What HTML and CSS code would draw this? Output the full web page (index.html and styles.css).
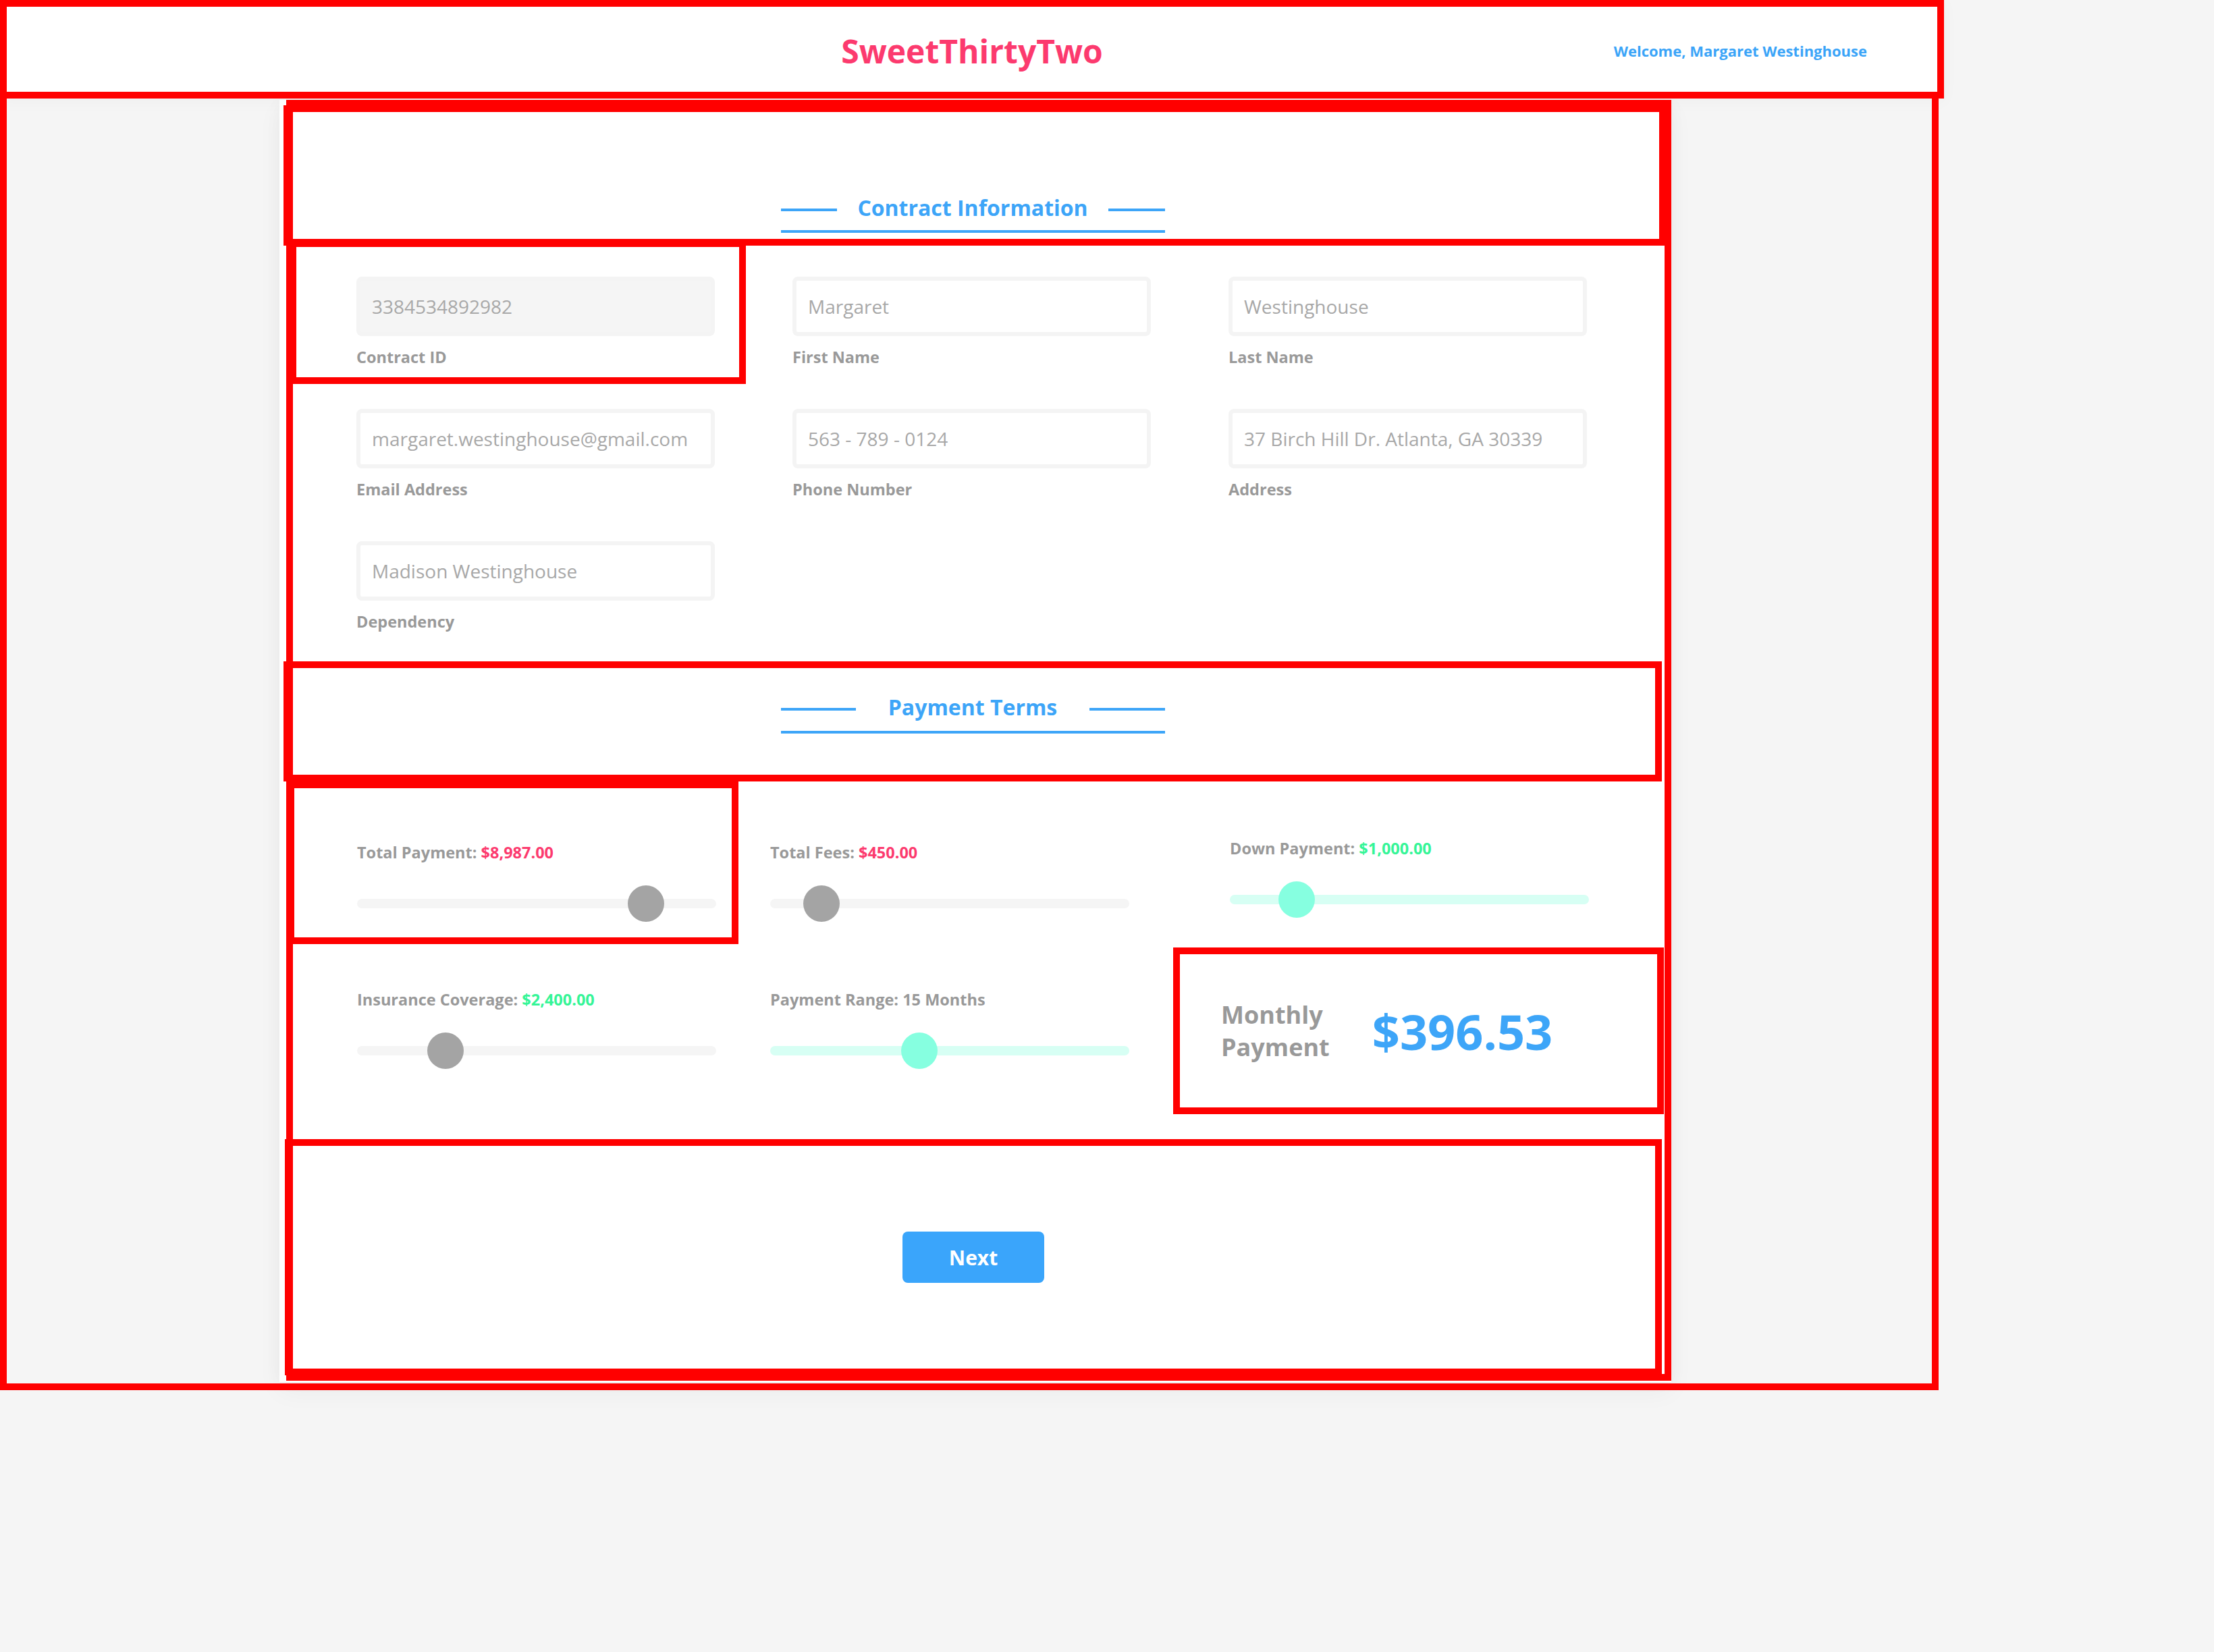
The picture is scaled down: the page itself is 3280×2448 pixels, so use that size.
FILE: index.html
```html
<!DOCTYPE html>
<html lang="en">
<head>
<meta charset="utf-8">
<title>SweetThirtyTwo – Contract</title>
<link rel="stylesheet" href="styles.css">
</head>
<body>
<div class="page">
  <header class="topbar hl">
    <div class="brand">SweetThirtyTwo</div>
    <div class="welcome">Welcome, Margaret Westinghouse</div>
  </header>

  <main class="main hl hl-main">
    <div class="card">
      <div class="card-body hl">

        <section class="section-head section-head--contract hl">
          <div class="heading">
            <div class="heading-row">
              <span class="heading-line"></span>
              <h2 class="heading-title">Contract Information</h2>
              <span class="heading-line"></span>
            </div>
          </div>
        </section>

        <div class="fields">
          <div class="field hl hl-field">
            <div class="input input--disabled">3384534892982</div>
            <div class="field-label">Contract ID</div>
          </div>
          <div class="field">
            <div class="input">Margaret</div>
            <div class="field-label">First Name</div>
          </div>
          <div class="field">
            <div class="input">Westinghouse</div>
            <div class="field-label">Last Name</div>
          </div>
          <div class="field">
            <div class="input">margaret.westinghouse@gmail.com</div>
            <div class="field-label">Email Address</div>
          </div>
          <div class="field">
            <div class="input">563 - 789 - 0124</div>
            <div class="field-label">Phone Number</div>
          </div>
          <div class="field">
            <div class="input">37 Birch Hill Dr. Atlanta, GA 30339</div>
            <div class="field-label">Address</div>
          </div>
          <div class="field">
            <div class="input">Madison Westinghouse</div>
            <div class="field-label">Dependency</div>
          </div>
        </div>

        <section class="section-head section-head--payment hl">
          <div class="heading heading--payment">
            <div class="heading-row">
              <span class="heading-line"></span>
              <h2 class="heading-title">Payment Terms</h2>
              <span class="heading-line"></span>
            </div>
          </div>
        </section>

        <div class="sliders">
          <div class="slider hl hl-slider">
            <div class="slider-label">Total Payment: <span class="val val--pink">$8,987.00</span></div>
            <div class="range"><div class="range-track"></div><div class="range-thumb" style="left: 401px"></div></div>
          </div>
          <div class="slider">
            <div class="slider-label">Total Fees: <span class="val val--pink">$450.00</span></div>
            <div class="range"><div class="range-track"></div><div class="range-thumb" style="left: 49px"></div></div>
          </div>
          <div class="slider slider--raised">
            <div class="slider-label">Down Payment: <span class="val val--green">$1,000.00</span></div>
            <div class="range range--mint"><div class="range-track"></div><div class="range-thumb" style="left: 72px"></div></div>
          </div>
          <div class="slider">
            <div class="slider-label">Insurance Coverage: <span class="val val--green">$2,400.00</span></div>
            <div class="range"><div class="range-track"></div><div class="range-thumb" style="left: 104px"></div></div>
          </div>
          <div class="slider">
            <div class="slider-label">Payment Range: 15 Months</div>
            <div class="range range--mint"><div class="range-track"></div><div class="range-thumb" style="left: 194px"></div></div>
          </div>
          <div class="monthly hl">
            <div class="monthly-label">Monthly<br>Payment</div>
            <div class="monthly-value">$396.53</div>
          </div>
        </div>

        <div class="footer hl">
          <button class="btn" type="button">Next</button>
        </div>

      </div>
    </div>
  </main>
</div>
</body>
</html>
```

FILE: styles.css
```css
* { box-sizing: border-box; }

html, body {
  margin: 0;
  padding: 0;
}

body {
  background: #f5f5f5;
  font-family: "Open Sans", "Noto Sans", sans-serif;
  min-height: 2448px;
}

.page {
  width: 2880px;
}

/* debug highlight boxes drawn over elements */
.hl { position: relative; }
.hl::after {
  content: "";
  position: absolute;
  top: 0; right: 0; bottom: 0; left: 0;
  border: 10px solid #ff0000;
  pointer-events: none;
  z-index: 10;
}
.hl-main::after { top: -10px; }
.hl-field::after { top: -8px; right: -35px; bottom: -9px; left: 5px; }
.hl-slider::after { left: 2px; right: -58px; bottom: -23px; }

/* header */
.topbar {
  height: 146px;
  background: #ffffff;
  display: grid;
  grid-template-columns: 1fr auto 1fr;
  align-items: center;
  z-index: 3;
  box-shadow: 0 4px 24px rgba(0, 0, 0, 0.03);
}

.brand {
  grid-column: 2;
  padding-top: 6px;
  font-size: 48px;
  line-height: 1;
  font-weight: 700;
  color: #fc3a6e;
}

.welcome {
  grid-column: 3;
  justify-self: end;
  padding-right: 114px;
  padding-top: 4px;
  font-size: 22px;
  font-weight: 700;
  color: #3aa4f8;
}

/* main wrapper */
.main {
  width: 2872px;
  height: 1914px;
  padding-top: 2px;
}

.card {
  margin-left: 414px;
  width: 2062px;
  padding: 0 0 2px 10px;
  background: #ffffff;
  box-shadow: 0 14px 36px rgba(0, 0, 0, 0.045), 0 0 24px rgba(0, 0, 0, 0.03);
}

.card-body {
  padding: 8px 0 8px 0;
}

/* section headings */
.section-head {
  margin-left: -4px;
}

.section-head--contract {
  width: 2048px;
  height: 208px;
  padding-top: 131px;
  padding-right: 6px;
}

.section-head--payment {
  width: 2042px;
  height: 178px;
  margin-top: 28px;
  padding-top: 47px;
}

.heading {
  width: 569px;
  margin: 0 auto;
  padding-bottom: 12px;
  border-bottom: 4px solid #3da5f8;
}

.heading--payment { padding-bottom: 14px; }

.heading-row {
  display: flex;
  align-items: center;
}

.heading-line {
  flex: 1;
  height: 4px;
  margin-top: 5px;
  background: #3da5f8;
}

.heading-title {
  margin: 0 30px;
  font-size: 32px;
  line-height: 42px;
  font-weight: 700;
  color: #3da5f8;
  white-space: nowrap;
}

.heading--payment .heading-title { margin: 0 48px; }

/* form fields */
.fields {
  display: grid;
  grid-template-columns: repeat(3, 646px);
}

.field {
  height: 196px;
  padding: 46px 0 0 104px;
}

.input {
  width: 531px;
  height: 88px;
  padding: 0 17px;
  display: flex;
  align-items: center;
  border: 6px solid #f4f4f4;
  border-radius: 8px;
  background: #ffffff;
  font-size: 28px;
  color: #a8a8a8;
  white-space: nowrap;
  overflow: hidden;
}

.input--disabled { background: #f5f5f5; }

.field-label {
  margin-top: 16px;
  font-size: 23.5px;
  line-height: 30px;
  font-weight: 700;
  color: #999999;
}

/* sliders */
.sliders {
  display: grid;
  grid-template-columns: 612px 681px 1fr;
  grid-template-rows: 218px auto;
  align-items: start;
}

.slider {
  padding: 90px 0 10px 105px;
}

.slider--raised { padding-top: 84px; }

.slider-label {
  font-size: 23.5px;
  line-height: 30px;
  font-weight: 700;
  color: #999999;
  white-space: nowrap;
}

.val--pink { color: #fc3a6e; }
.val--green { color: #35f597; }

.range {
  position: relative;
  width: 532px;
  height: 54px;
  margin-top: 34px;
  display: flex;
  align-items: center;
}

.range-track {
  width: 100%;
  height: 14px;
  border-radius: 7px;
  background: #f5f5f5;
}

.range-thumb {
  position: absolute;
  top: 0;
  width: 54px;
  height: 54px;
  border-radius: 50%;
  background: #a4a4a4;
}

.range--mint .range-track { background: #d7fff4; }
.range--mint .range-thumb { background: #86ffe0; }

/* monthly payment */
.monthly {
  width: 727px;
  height: 247px;
  margin: 28px 0 0 21px;
  padding-left: 71px;
  display: flex;
  align-items: center;
  gap: 63px;
}

.monthly-label {
  font-size: 36px;
  line-height: 48px;
  font-weight: 700;
  color: #999999;
}

.monthly-value {
  font-size: 72px;
  line-height: 96px;
  font-weight: 700;
  color: #3da5f8;
}

/* footer */
.footer {
  width: 2040px;
  height: 350px;
  margin: 37px 0 0 -2px;
  display: flex;
  justify-content: center;
  align-items: center;
}

.btn {
  width: 210px;
  height: 76px;
  border: 0;
  border-radius: 8px;
  background: #3aa5fb;
  color: #ffffff;
  font-family: inherit;
  font-size: 30px;
  font-weight: 700;
  cursor: pointer;
}
```
